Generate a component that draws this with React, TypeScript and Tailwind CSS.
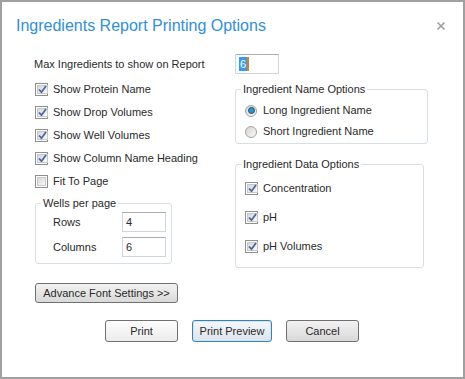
import { FC, ReactNode } from 'react'

const CheckBox: FC<{ checked?: boolean }> = ({ checked }) => (
  <span className="w-[13px] h-[13px] shrink-0 border border-[#8e8f8f] bg-white p-[1px] flex">
    <span className="flex-1 bg-gradient-to-br from-[#d6d6d6] to-[#fbfbfb] border border-[#c8c8c8] flex items-center justify-center">
      {checked && (
        <svg width="9" height="9" viewBox="0 0 9 9">
          <path d="M1 4.5 L3.5 7.2 L8 1" fill="none" stroke="#4866a8" strokeWidth="1.8" />
        </svg>
      )}
    </span>
  </span>
)

const Radio: FC<{ checked?: boolean }> = ({ checked }) => (
  <span className="w-[12px] h-[12px] shrink-0 rounded-full border border-[#a2a2a2] bg-gradient-to-br from-[#d4d4d4] to-[#fafafa] flex items-center justify-center">
    {checked && (
      <span className="w-[7px] h-[7px] rounded-full bg-[#2f93d0] border border-[#1b4f79]" />
    )}
  </span>
)

const Group: FC<{ title: string; className: string; children: ReactNode }> = ({ title, className, children }) => (
  <div className={`border border-[#d5dfe5] rounded-[3px] ${className}`}>
    <div className="-mt-[8px] ml-[5px] px-[2px] h-[14px] leading-[14px] bg-white w-fit">{title}</div>
    {children}
  </div>
)

const TextBox: FC<{ value: string; selected?: boolean }> = ({ value, selected }) => (
  <div className="w-[44px] h-[20px] border border-[#d0d5dd] border-t-[#abadb3] bg-white flex items-center pl-[3px]">
    {selected ? (
      <>
        <span className="bg-[#3399ff] text-white leading-[14px] px-[1px]">{value}</span>
        <span className="w-[2px] h-[14px] bg-[#e0800e]" />
      </>
    ) : (
      <span>{value}</span>
    )}
  </div>
)

const Btn: FC<{ label: string; className: string }> = ({ label, className }) => (
  <button className={`rounded-[3px] border flex items-center justify-center ${className}`}>{label}</button>
)

const App: FC = (): JSX.Element => {
  const leftChecks: [string, boolean][] = [
    ['Show Protein Name', true],
    ['Show Drop Volumes', true],
    ['Show Well Volumes', true],
    ['Show Column Name Heading', true],
    ['Fit To Page', false],
  ]
  const dataChecks = ['Concentration', 'pH', 'pH Volumes']

  return (
    <div className="w-[465px] h-[379px] bg-white border-2 border-[#a0a0a0] font-['Liberation_Sans',Arial,sans-serif] text-[11px] text-[#2a2a2a]">
      <div className="pt-[12px] pl-[14px] pr-[17px] h-[36px] flex items-center justify-between">
        <span className="text-[16px] leading-[24px] text-[#2f8fdc]">Ingredients Report Printing Options</span>
        <svg width="10" height="10" viewBox="0 0 10 10">
          <path d="M1.5 1.5 L8.5 8.5 M8.5 1.5 L1.5 8.5" stroke="#a0a0a0" strokeWidth="1.7" />
        </svg>
      </div>

      <div className="mt-[16px] pl-[32px] h-[20px] flex items-center">
        <span className="w-[201px]">Max Ingredients to show on Report</span>
        <TextBox value="6" selected />
      </div>

      <div className="mt-[4px] flex">
        <div className="w-[233px] pl-[33px]">
          {leftChecks.map(([label, checked]) => (
            <div key={label} className="h-[23px] flex items-center gap-[5px]">
              <CheckBox checked={checked} />
              <span>{label}</span>
            </div>
          ))}
          <Group title="Wells per page" className="mt-[10px] w-[137px] h-[61px]">
            <div className="mt-[2px] pl-[17px] h-[20px] flex items-center">
              <span className="w-[69px]">Rows</span>
              <TextBox value="4" />
            </div>
            <div className="mt-[5px] pl-[17px] h-[20px] flex items-center">
              <span className="w-[69px]">Columns</span>
              <TextBox value="6" />
            </div>
          </Group>
          <Btn
            label="Advance Font Settings >>"
            className="mt-[19px] w-[143px] h-[20px] border-[#707070] bg-gradient-to-b from-[#f2f2f2] to-[#d9d9d9]"
          />
        </div>

        <div>
          <Group title="Ingredient Name Options" className="mt-[11px] w-[193px] h-[55px]">
            <div className="mt-[4px] pl-[9px] h-[21px] flex items-center gap-[6px]">
              <Radio checked />
              <span>Long Ingredient Name</span>
            </div>
            <div className="pl-[9px] h-[21px] flex items-center gap-[6px]">
              <Radio />
              <span>Short Ingredient Name</span>
            </div>
          </Group>
          <Group title="Ingredient Data Options" className="mt-[20px] w-[189px] h-[104px]">
            <div className="mt-[3px]">
              {dataChecks.map((label) => (
                <div key={label} className="pl-[9px] h-[29px] flex items-center gap-[5px]">
                  <CheckBox checked />
                  <span>{label}</span>
                </div>
              ))}
            </div>
          </Group>
        </div>
      </div>

      <div className="mt-[17px] pl-[103px] flex gap-[14px]">
        <Btn label="Print" className="w-[73px] h-[22px] border-[#707070] bg-gradient-to-b from-[#fdfdfd] to-[#ececec]" />
        <Btn
          label="Print Preview"
          className="w-[80px] h-[22px] border-[#3c7fb1] bg-gradient-to-b from-[#f4f8fb] to-[#dce4ec] shadow-[inset_0_0_0_1px_#cfe6f5]"
        />
        <Btn label="Cancel" className="w-[73px] h-[22px] border-[#707070] bg-gradient-to-b from-[#f2f2f2] to-[#d9d9d9]" />
      </div>
    </div>
  )
}

export default App
